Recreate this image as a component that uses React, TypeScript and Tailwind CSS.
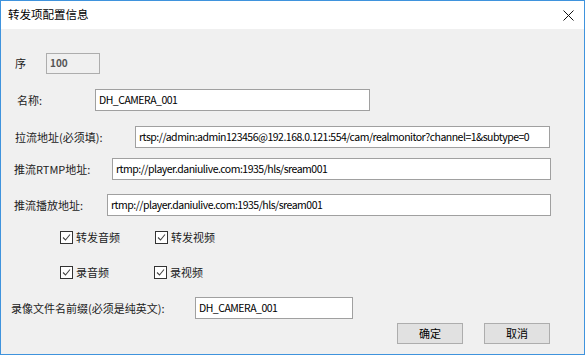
import React from "react";

// 转发项配置对话框

const font = "font-['Noto_Sans_CJK_SC','Noto_Sans',sans-serif]";

function Field({ value, className }: { value: string; className: string }) {
  return (
    <div
      className={`h-[22px] bg-white border border-[#a0a0a0] flex items-center pl-[3px] text-[10.5px] tracking-[-0.5px] text-black whitespace-nowrap overflow-hidden ${className}`}
    >
      {value}
    </div>
  );
}

function Check({ label, className }: { label: string; className?: string }) {
  return (
    <div className={`flex items-center h-[13px] ${className ?? ""}`}>
      <span className="w-[13px] h-[13px] border border-[#333] bg-white flex items-center justify-center">
        <svg width="9" height="9" viewBox="0 0 9 9">
          <path d="M1 4.5 L3.5 7 L8 1.5" fill="none" stroke="#444" strokeWidth="1.1" />
        </svg>
      </span>
      <span className="ml-[3px] text-[11px] leading-[13px] text-[#222]">{label}</span>
    </div>
  );
}

export default function App() {
  return (
    <div className={`w-[586px] h-[356px] bg-white ${font}`}>
      <div className="w-[585px] h-[355px] border border-[#3f93dd] bg-[#f0f0f0] flex flex-col">
        <header className="h-[28px] bg-white flex items-center justify-between pl-[7px] pr-[10px]">
          <span className="text-[11.5px] text-black">转发项配置信息</span>
          <svg width="11" height="11" viewBox="0 0 11 11">
            <path d="M0.5 0.5 L10.5 10.5 M10.5 0.5 L0.5 10.5" stroke="#111" strokeWidth="1" />
          </svg>
        </header>

        <div className="flex flex-col text-[11px] text-[#222]">
          <div className="flex items-center mt-[24px] pl-[14px]">
            <span className="w-[31px]">序</span>
            <div className="w-[54px] h-[21px] border border-[#adadad] bg-[#f0f0f0] pl-[3px] pt-[1px] text-[10px] font-bold text-[#555]">
              100
            </div>
          </div>

          <div className="flex items-center mt-[15px] pl-[16px]">
            <span className="w-[78px]">名称:</span>
            <Field value="DH_CAMERA_001" className="w-[275px]" />
          </div>

          <div className="flex items-center mt-[15px] pl-[14px]">
            <span className="w-[120px]">拉流地址(必须填):</span>
            <Field
              value="rtsp://admin:admin123456@192.168.0.121:554/cam/realmonitor?channel=1&subtype=0"
              className="w-[415px]"
            />
          </div>

          <div className="flex items-center mt-[10px] pl-[13px]">
            <span className="w-[98px]">推流RTMP地址:</span>
            <Field value="rtmp://player.daniulive.com:1935/hls/sream001" className="w-[439px]" />
          </div>

          <div className="flex items-center mt-[14px] pl-[13px]">
            <span className="w-[93px]">推流播放地址:</span>
            <Field value="rtmp://player.daniulive.com:1935/hls/sream001" className="w-[444px]" />
          </div>

          <div className="flex items-center mt-[15px] pl-[59px]">
            <Check label="转发音频" className="w-[95px]" />
            <Check label="转发视频" />
          </div>

          <div className="flex items-center mt-[22px] pl-[59px]">
            <Check label="录音频" className="w-[94px]" />
            <Check label="录视频" />
          </div>

          <div className="flex items-center mt-[18px] pl-[10px]">
            <span className="w-[184px]">录像文件名前缀(必须是纯英文):</span>
            <Field value="DH_CAMERA_001" className="w-[158px]" />
          </div>

          <div className="flex items-center mt-[4px] pl-[396px] gap-[21px]">
            <button className="w-[66px] h-[21px] bg-[#e1e1e1] border border-[#adadad] text-[11px] text-black">
              确定
            </button>
            <button className="w-[66px] h-[21px] bg-[#e1e1e1] border border-[#adadad] text-[11px] text-black">
              取消
            </button>
          </div>
        </div>
      </div>
    </div>
  );
}
